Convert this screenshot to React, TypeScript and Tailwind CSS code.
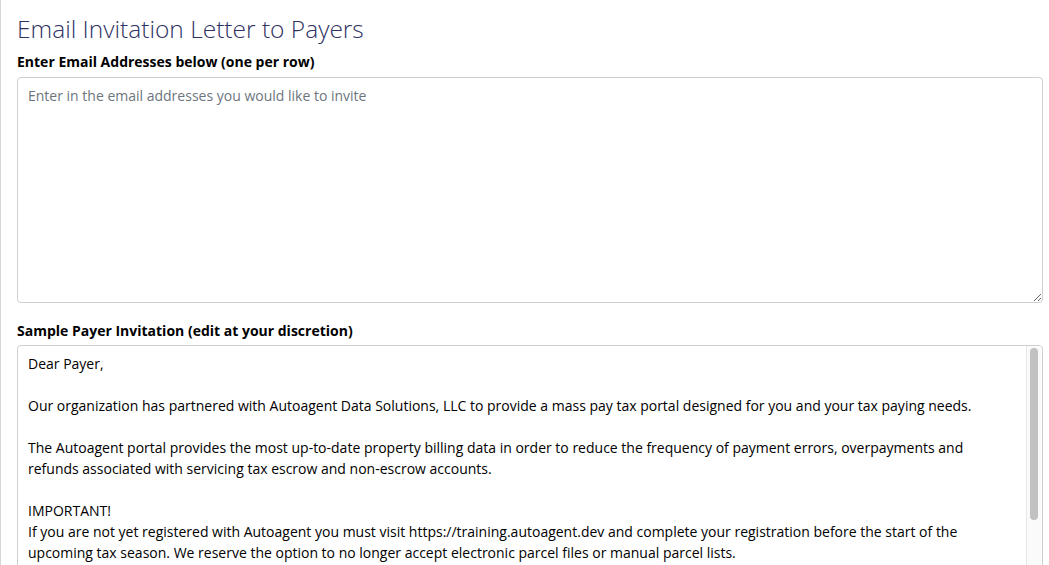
const letter = `Dear Payer,

Our organization has partnered with Autoagent Data Solutions, LLC to provide a mass pay tax portal designed for you and your tax paying needs.

The Autoagent portal provides the most up-to-date property billing data in order to reduce the frequency of payment errors, overpayments and refunds associated with servicing tax escrow and non-escrow accounts.

IMPORTANT!
If you are not yet registered with Autoagent you must visit https://training.autoagent.dev and complete your registration before the start of the upcoming tax season. We reserve the option to no longer accept electronic parcel files or manual parcel lists.`;

export default function App() {
  return (
    <div className="h-[565px] overflow-hidden bg-white border-l border-[#d6d6d6] font-['Open_Sans',sans-serif] text-[#212529]">
      <div className="pl-4 pr-[6px] pt-[10px]">
        <h1 className="text-[24.5px] font-light leading-[38px] text-[#2d3264]">Email Invitation Letter to Payers</h1>
        <label className="block mt-[4px] mb-[5px] text-[14px] font-bold leading-[20px] text-black">
          Enter Email Addresses below (one per row)
        </label>
        <textarea
          className="block w-full h-[226px] rounded-[4px] border border-[#cfcfcf] px-[10px] pt-[7px] pb-[6px] text-[14px] leading-[21px] outline-none placeholder:text-[#6c757d]"
          placeholder="Enter in the email addresses you would like to invite"
        />
        <label className="block mt-[18px] mb-[4px] text-[14px] font-bold leading-[20px] text-black">
          Sample Payer Invitation (edit at your discretion)
        </label>
        <div className="flex h-[230px] rounded-[4px] border border-[#cfcfcf] overflow-hidden">
          <div className="flex-1 whitespace-pre-wrap px-[10px] pt-[7px] pr-[40px] text-[14px] leading-[21px] text-black">
            {letter}
          </div>
          <div className="w-[15px] mr-[1px] border-l border-[#e6e6e6] bg-[#fafafa] pt-[2px] px-[3px]">
            <div className="h-[172px] rounded-full bg-[#c1c1c1]" />
          </div>
        </div>
      </div>
    </div>
  );
}
